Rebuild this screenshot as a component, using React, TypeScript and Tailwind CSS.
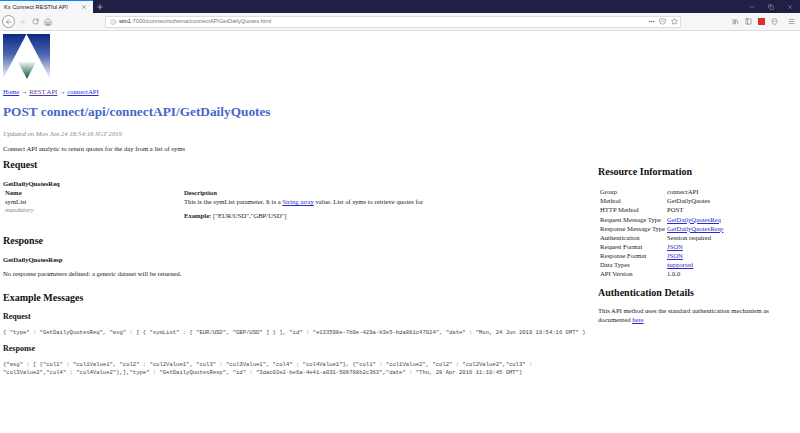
import { ArrowLeft, ArrowRight, RotateCw, Home, Info, Ellipsis, Star, Library, PanelLeft, Menu, Plus, X, Minus, Copy, Pocket, ShieldCheck } from "lucide-react";

const Logo = () => (
  <svg width="47" height="45" viewBox="0 0 47 45" className="block">
    <defs>
      <linearGradient id="sky" x1="0" y1="0" x2="0" y2="1">
        <stop offset="0" stopColor="#0b2a86" />
        <stop offset="0.45" stopColor="#4a64ae" />
        <stop offset="1" stopColor="#ffffff" />
      </linearGradient>
      <linearGradient id="leaf" x1="0" y1="0" x2="0" y2="1">
        <stop offset="0" stopColor="#eef5f0" />
        <stop offset="1" stopColor="#0b4f33" />
      </linearGradient>
    </defs>
    <rect width="47" height="45" fill="url(#sky)" />
    <polygon points="23.5,0 47,45 0,45" fill="#ffffff" />
    <polygon points="15,28 33,28 24,45" fill="url(#leaf)" />
  </svg>
);

const Link = ({ children, visited }: { children: React.ReactNode; visited?: boolean }) => (
  <a className={visited ? "text-[#5a3a96] underline" : "text-[#2a2ad0] underline"}>{children}</a>
);

const info: [string, string, boolean][] = [
  ["Group", "connectAPI", false],
  ["Method", "GetDailyQuotes", false],
  ["HTTP Method", "POST", false],
  ["Request Message Type", "GetDailyQuotesReq", true],
  ["Response Message Type", "GetDailyQuotesResp", true],
  ["Authentication", "Session required", false],
  ["Request Format", "JSON", true],
  ["Response Format", "JSON", true],
  ["Data Types", "supported", true],
  ["API Version", "1.0.0", false],
];

const Browser = () => (
  <div className="font-['Liberation_Sans',sans-serif]">
    <div className="flex h-[13px] items-stretch bg-[#1f2044] text-white">
      <div className="flex w-[93px] items-center justify-between border-t border-[#0a84ff] bg-[#f5f6f7] pl-[4px] pr-[6px] text-[5.8px] text-[#222]">
        <span>Kx Connect RESTful API</span>
        <X size={6} strokeWidth={1.5} />
      </div>
      <div className="ml-[2px] flex w-[10px] items-center justify-center">
        <Plus size={8} strokeWidth={1.5} />
      </div>
      <div className="ml-auto flex items-center gap-[13px] pr-[7px] text-[#c9cad6]">
        <Minus size={6} strokeWidth={1.5} />
        <Copy size={6} strokeWidth={1.5} />
        <X size={6} strokeWidth={1.5} />
      </div>
    </div>
    <div className="flex h-[18px] items-center border-b border-[#dcdde0] bg-[#f5f6f7] pl-[2px] pr-[5px] text-[#444]">
      <div className="flex h-[13px] w-[13px] items-center justify-center rounded-full border border-[#9a9a9a] bg-white">
        <ArrowLeft size={8} strokeWidth={1.5} />
      </div>
      <ArrowRight size={8} strokeWidth={1.5} className="ml-[3px] text-[#b5b5b5]" />
      <RotateCw size={7} strokeWidth={1.5} className="ml-[6px]" />
      <Home size={8} strokeWidth={1.5} className="ml-[5px]" />
      <div className="ml-[53px] flex h-[12px] w-[576px] items-center border border-[#dcdde0] bg-white pl-[4px] pr-[2px] text-[5.7px]">
        <Info size={6} strokeWidth={1.2} />
        <span className="ml-[3px] text-[#222]">sim1</span>
        <span className="text-[#777]">:7000/connect/schema/connectAPIGetDailyQuotes.html</span>
        <Ellipsis size={7} className="ml-auto" />
        <Pocket size={7} strokeWidth={1.5} className="ml-[4px]" />
        <Star size={7} strokeWidth={1.5} className="ml-[5px]" />
      </div>
      <div className="ml-auto flex items-center gap-[6px]">
        <Library size={7} strokeWidth={1.5} />
        <PanelLeft size={7} strokeWidth={1.5} />
        <div className="h-[7px] w-[7px] bg-[#e02b2b]" />
        <ShieldCheck size={7} strokeWidth={1.5} />
        <Menu size={7} strokeWidth={1.5} className="ml-[4px]" />
      </div>
    </div>
  </div>
);

export default function App() {
  return (
    <div className="h-[433px] w-[800px] overflow-hidden bg-white">
      <Browser />
      <div className="px-[3px] pt-[3px] font-['Liberation_Serif',serif] text-[6.65px] leading-[9px] text-[#222]">
        <Logo />
        <p className="mt-[8px]">
          <Link>Home</Link> → <Link visited>REST API</Link> → <Link>connectAPI</Link>
        </p>
        <h1 className="mt-[8px] text-[13.3px] leading-[16px] font-bold text-[#4a66c8]">
          POST connect/api/connectAPI/GetDailyQuotes
        </h1>
        <p className="mt-[9px] text-[#888] italic">Updated on Mon Jun 24 18:54:16 SGT 2019</p>
        <p className="mt-[6px]">Connect API analytic to return quotes for the day from a list of syms</p>

        <div className="flex">
          <div className="w-[595px]">
            <h2 className="mt-[6px] text-[10px] leading-[12px] font-bold text-[#111]">Request</h2>
            <h3 className="mt-[8px] leading-[9px] font-bold text-[#111]">GetDailyQuotesReq</h3>
            <div className="flex pl-[2px]">
              <div className="w-[179px]">
                <div className="font-bold">Name</div>
                <div>symList</div>
                <div className="-mt-[1px] text-[#888] italic">mandatory</div>
              </div>
              <div>
                <div className="font-bold">Description</div>
                <div>
                  This is the symList parameter. It is a <Link>String array</Link> value. List of syms to retrieve quotes for
                </div>
                <div className="mt-[5px]">
                  <b>Example:</b> ["EUR/USD","GBP/USD"]
                </div>
              </div>
            </div>
            <h2 className="mt-[15px] text-[10px] leading-[12px] font-bold text-[#111]">Response</h2>
            <h3 className="mt-[8px] leading-[9px] font-bold text-[#111]">GetDailyQuotesResp</h3>
            <p className="mt-[5px]">No response parameters defined: a generic dataset will be returned.</p>
            <h2 className="mt-[14px] text-[10px] leading-[12px] font-bold text-[#111]">Example Messages</h2>
            <h3 className="mt-[8px] text-[8px] leading-[10px] font-bold text-[#111]">Request</h3>
            <pre className="mt-[7px] font-['Liberation_Mono',monospace] text-[5.56px] leading-[7px] text-[#444]">{`{ "type" : "GetDailyQuotesReq", "msg" : [ { "symList" : [ "EUR/USD", "GBP/USD" ] } ], "id" : "e133598e-7b9e-429a-b3e5-bda881c47024", "date" : "Mon, 24 Jun 2019 10:54:16 GMT" }`}</pre>
            <h3 className="mt-[8px] text-[8px] leading-[10px] font-bold text-[#111]">Response</h3>
            <pre className="mt-[7px] font-['Liberation_Mono',monospace] text-[5.56px] leading-[8px] text-[#444]">{`{"msg" : [ {"col1" : "col1Value1", "col2" : "col2Value1", "col3" : "col3Value1", "col4" : "col4Value1"}, {"col1" : "col1Value2", "col2" : "col2Value2","col3" :
"col3Value2","col4" : "col4Value2"},],"type" : "GetDailyQuotesResp", "id" : "3dac02e2-be6a-4e41-a031-508788b2c363","date" : "Thu, 28 Apr 2016 11:10:45 GMT"}`}</pre>
          </div>
          <div className="w-[195px] pt-[6px]">
            <h2 className="mt-[7px] text-[10px] leading-[12px] font-bold text-[#111]">Resource Information</h2>
            <div className="mt-[9px] pl-[2px]">
              {info.map(([k, v, link]) => (
                <div key={k} className="flex h-[9.17px] items-center">
                  <div className="w-[67px] shrink-0 whitespace-nowrap">{k}</div>
                  <div>{link ? <Link>{v}</Link> : v}</div>
                </div>
              ))}
            </div>
            <h2 className="mt-[8px] text-[10px] leading-[12px] font-bold text-[#111]">Authentication Details</h2>
            <p className="mt-[7px] leading-[9px]">
              This API method uses the standard authentication mechanism as documented <Link>here</Link>
            </p>
          </div>
        </div>
      </div>
    </div>
  );
}
